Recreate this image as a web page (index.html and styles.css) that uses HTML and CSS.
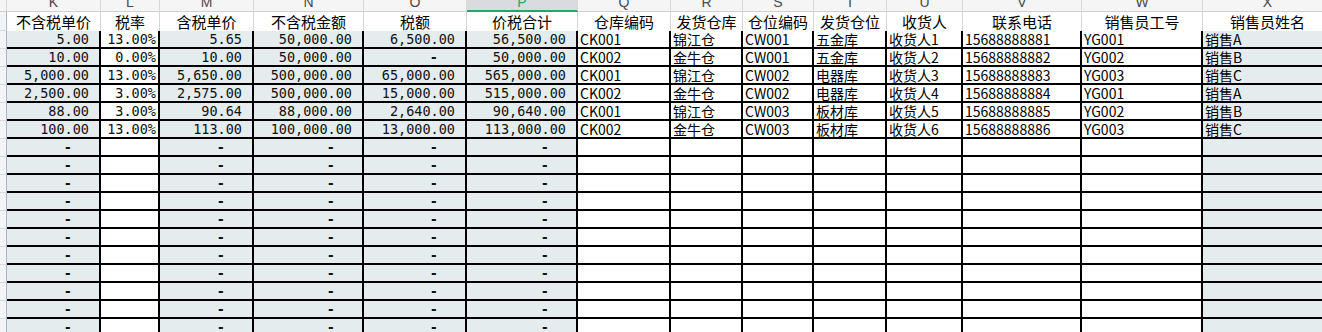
FILE: index.html
```html
<!DOCTYPE html>
<html lang="zh">
<head>
<meta charset="utf-8">
<title>Sheet</title>
<link rel="stylesheet" href="styles.css">
</head>
<body>
<div class="sheet">
  <div class="row hdr">
    <div class="rh corner"></div>
    <div class="ch"><span>K</span></div><div class="ch"><span>L</span></div><div class="ch"><span>M</span></div><div class="ch"><span>N</span></div><div class="ch"><span>O</span></div><div class="ch sel"><span>P</span></div><div class="ch"><span>Q</span></div><div class="ch"><span>R</span></div><div class="ch"><span>S</span></div><div class="ch"><span>T</span></div><div class="ch"><span>U</span></div><div class="ch"><span>V</span></div><div class="ch"><span>W</span></div><div class="ch"><span>X</span></div>
  </div>
  <div class="row title">
    <div class="rh"></div>
    <div class="tc">不含税单价</div><div class="tc">税率</div><div class="tc">含税单价</div><div class="tc">不含税金额</div><div class="tc">税额</div><div class="tc">价税合计</div><div class="tc">仓库编码</div><div class="tc">发货仓库</div><div class="tc">仓位编码</div><div class="tc">发货仓位</div><div class="tc">收货人</div><div class="tc">联系电话</div><div class="tc">销售员工号</div><div class="tc">销售员姓名</div>
  </div>

  <div class="row data">
    <div class="rh"></div>
    <div class="c f n">5.00</div><div class="c n p">13.00%</div><div class="c f n">5.65</div><div class="c f n">50,000.00</div><div class="c f n">6,500.00</div><div class="c f n">56,500.00</div>
    <div class="c t">CK001</div><div class="c t">锦江仓</div><div class="c t">CW001</div><div class="c t">五金库</div><div class="c t">收货人1</div><div class="c t">15688888881</div><div class="c t">YG001</div><div class="c f t">销售A</div>
  </div>
  <div class="row data">
    <div class="rh"></div>
    <div class="c f n">10.00</div><div class="c n p">0.00%</div><div class="c f n">10.00</div><div class="c f n">50,000.00</div><div class="c f n d">-</div><div class="c f n">50,000.00</div>
    <div class="c t">CK002</div><div class="c t">金牛仓</div><div class="c t">CW001</div><div class="c t">五金库</div><div class="c t">收货人2</div><div class="c t">15688888882</div><div class="c t">YG002</div><div class="c f t">销售B</div>
  </div>
  <div class="row data">
    <div class="rh"></div>
    <div class="c f n">5,000.00</div><div class="c n p">13.00%</div><div class="c f n">5,650.00</div><div class="c f n">500,000.00</div><div class="c f n">65,000.00</div><div class="c f n">565,000.00</div>
    <div class="c t">CK001</div><div class="c t">锦江仓</div><div class="c t">CW002</div><div class="c t">电器库</div><div class="c t">收货人3</div><div class="c t">15688888883</div><div class="c t">YG003</div><div class="c f t">销售C</div>
  </div>
  <div class="row data">
    <div class="rh"></div>
    <div class="c f n">2,500.00</div><div class="c n p">3.00%</div><div class="c f n">2,575.00</div><div class="c f n">500,000.00</div><div class="c f n">15,000.00</div><div class="c f n">515,000.00</div>
    <div class="c t">CK002</div><div class="c t">金牛仓</div><div class="c t">CW002</div><div class="c t">电器库</div><div class="c t">收货人4</div><div class="c t">15688888884</div><div class="c t">YG001</div><div class="c f t">销售A</div>
  </div>
  <div class="row data">
    <div class="rh"></div>
    <div class="c f n">88.00</div><div class="c n p">3.00%</div><div class="c f n">90.64</div><div class="c f n">88,000.00</div><div class="c f n">2,640.00</div><div class="c f n">90,640.00</div>
    <div class="c t">CK001</div><div class="c t">锦江仓</div><div class="c t">CW003</div><div class="c t">板材库</div><div class="c t">收货人5</div><div class="c t">15688888885</div><div class="c t">YG002</div><div class="c f t">销售B</div>
  </div>
  <div class="row data">
    <div class="rh"></div>
    <div class="c f n">100.00</div><div class="c n p">13.00%</div><div class="c f n">113.00</div><div class="c f n">100,000.00</div><div class="c f n">13,000.00</div><div class="c f n">113,000.00</div>
    <div class="c t">CK002</div><div class="c t">金牛仓</div><div class="c t">CW003</div><div class="c t">板材库</div><div class="c t">收货人6</div><div class="c t">15688888886</div><div class="c t">YG003</div><div class="c f t">销售C</div>
  </div>

  <div class="row data">
    <div class="rh"></div>
    <div class="c f n d">-</div><div class="c"></div><div class="c f n d">-</div><div class="c f n d">-</div><div class="c f n d">-</div><div class="c f n d">-</div>
    <div class="c"></div><div class="c"></div><div class="c"></div><div class="c"></div><div class="c"></div><div class="c"></div><div class="c"></div><div class="c f"></div>
  </div>
  <div class="row data">
    <div class="rh"></div>
    <div class="c f n d">-</div><div class="c"></div><div class="c f n d">-</div><div class="c f n d">-</div><div class="c f n d">-</div><div class="c f n d">-</div>
    <div class="c"></div><div class="c"></div><div class="c"></div><div class="c"></div><div class="c"></div><div class="c"></div><div class="c"></div><div class="c f"></div>
  </div>
  <div class="row data">
    <div class="rh"></div>
    <div class="c f n d">-</div><div class="c"></div><div class="c f n d">-</div><div class="c f n d">-</div><div class="c f n d">-</div><div class="c f n d">-</div>
    <div class="c"></div><div class="c"></div><div class="c"></div><div class="c"></div><div class="c"></div><div class="c"></div><div class="c"></div><div class="c f"></div>
  </div>
  <div class="row data">
    <div class="rh"></div>
    <div class="c f n d">-</div><div class="c"></div><div class="c f n d">-</div><div class="c f n d">-</div><div class="c f n d">-</div><div class="c f n d">-</div>
    <div class="c"></div><div class="c"></div><div class="c"></div><div class="c"></div><div class="c"></div><div class="c"></div><div class="c"></div><div class="c f"></div>
  </div>
  <div class="row data">
    <div class="rh"></div>
    <div class="c f n d">-</div><div class="c"></div><div class="c f n d">-</div><div class="c f n d">-</div><div class="c f n d">-</div><div class="c f n d">-</div>
    <div class="c"></div><div class="c"></div><div class="c"></div><div class="c"></div><div class="c"></div><div class="c"></div><div class="c"></div><div class="c f"></div>
  </div>
  <div class="row data">
    <div class="rh"></div>
    <div class="c f n d">-</div><div class="c"></div><div class="c f n d">-</div><div class="c f n d">-</div><div class="c f n d">-</div><div class="c f n d">-</div>
    <div class="c"></div><div class="c"></div><div class="c"></div><div class="c"></div><div class="c"></div><div class="c"></div><div class="c"></div><div class="c f"></div>
  </div>
  <div class="row data">
    <div class="rh"></div>
    <div class="c f n d">-</div><div class="c"></div><div class="c f n d">-</div><div class="c f n d">-</div><div class="c f n d">-</div><div class="c f n d">-</div>
    <div class="c"></div><div class="c"></div><div class="c"></div><div class="c"></div><div class="c"></div><div class="c"></div><div class="c"></div><div class="c f"></div>
  </div>
  <div class="row data">
    <div class="rh"></div>
    <div class="c f n d">-</div><div class="c"></div><div class="c f n d">-</div><div class="c f n d">-</div><div class="c f n d">-</div><div class="c f n d">-</div>
    <div class="c"></div><div class="c"></div><div class="c"></div><div class="c"></div><div class="c"></div><div class="c"></div><div class="c"></div><div class="c f"></div>
  </div>
  <div class="row data">
    <div class="rh"></div>
    <div class="c f n d">-</div><div class="c"></div><div class="c f n d">-</div><div class="c f n d">-</div><div class="c f n d">-</div><div class="c f n d">-</div>
    <div class="c"></div><div class="c"></div><div class="c"></div><div class="c"></div><div class="c"></div><div class="c"></div><div class="c"></div><div class="c f"></div>
  </div>
  <div class="row data">
    <div class="rh"></div>
    <div class="c f n d">-</div><div class="c"></div><div class="c f n d">-</div><div class="c f n d">-</div><div class="c f n d">-</div><div class="c f n d">-</div>
    <div class="c"></div><div class="c"></div><div class="c"></div><div class="c"></div><div class="c"></div><div class="c"></div><div class="c"></div><div class="c f"></div>
  </div>
  <div class="row data">
    <div class="rh"></div>
    <div class="c f n d">-</div><div class="c"></div><div class="c f n d">-</div><div class="c f n d">-</div><div class="c f n d">-</div><div class="c f n d">-</div>
    <div class="c"></div><div class="c"></div><div class="c"></div><div class="c"></div><div class="c"></div><div class="c"></div><div class="c"></div><div class="c f"></div>
  </div>
</div>
</body>
</html>
```

FILE: styles.css
```css
* { box-sizing: border-box; }

html, body {
  margin: 0;
  padding: 0;
  background: #ffffff;
  overflow: hidden;
}

body {
  font-family: "Noto Sans CJK SC", "Noto Sans", sans-serif;
  color: #000;
}

.sheet {
  width: 1333px;
}

.row {
  display: grid;
  grid-template-columns: 7px 94px 59px 94px 110px 103px 111px 93px 72px 71px 73px 76px 119px 121px 130px;
}

/* row header strip */
.rh {
  background: #f3f4f7;
  border-right: 1px solid #a9b5ce;
  border-bottom: 1px solid #d3d9e4;
}

.corner {
  border-right: 1px solid #d6d6d6;
  border-bottom: 1px solid #d0d0d0;
  background: #f5f5f5;
}

/* column letter header */
.hdr {
  height: 12px;
}

.ch {
  background: #f5f5f5;
  border-right: 1px solid #d8d8d8;
  border-bottom: 1px solid #d0d0d0;
  overflow: hidden;
  text-align: center;
  color: #4a4a4a;
  font-family: "Liberation Sans", sans-serif;
  font-size: 14px;
  line-height: 12px;
}

.ch span {
  display: block;
  margin-top: -4px;
}

.ch.sel {
  background: #d9dbde;
  color: #27a566;
  border-bottom: 2px solid #27a566;
}

/* title row */
.title {
  height: 19px;
}

.tc {
  border-right: 1px solid #d6d6d6;
  text-align: center;
  font-size: 15px;
  line-height: 18px;
  padding-top: 1px;
  white-space: nowrap;
  overflow: hidden;
}

/* data rows */
.data {
  height: 18px;
}

.c {
  border-right: 2px solid #000;
  border-bottom: 2px solid #000;
  line-height: 16px;
  white-space: nowrap;
  overflow: hidden;
}

.f {
  background: #e4ecee;
}

.n {
  text-align: right;
  padding-right: 10px;
  padding-top: 1px;
  line-height: 15px;
  font-family: "DejaVu Sans Mono", "Liberation Mono", monospace;
  font-size: 13.5px;
  color: #111;
}

.n.p {
  padding-right: 2px;
}

.n.d {
  padding-right: 27px;
  font-weight: bold;
}

.t {
  padding-left: 2px;
  font-size: 14px;
  line-height: 16px;
}
```
